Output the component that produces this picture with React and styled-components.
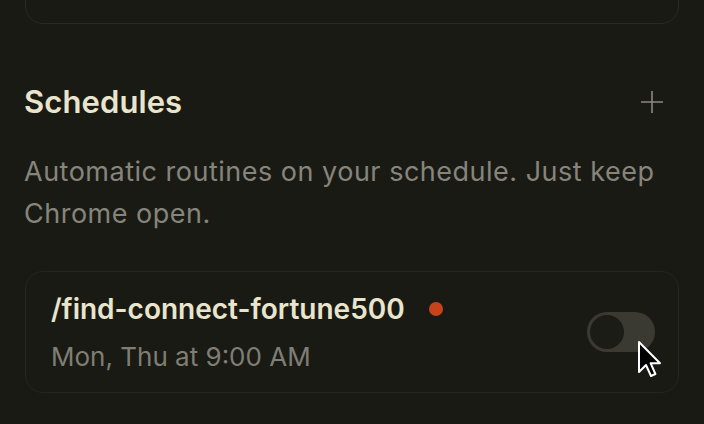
import styled, { createGlobalStyle } from "styled-components";

const Global = createGlobalStyle`
  html, body {
    margin: 0;
    padding: 0;
    background: #1a1a15;
  }
  body {
    font-family: Inter, "Noto Sans", sans-serif;
    -webkit-font-smoothing: antialiased;
  }
`;

const Page = styled.div`
  width: 704px;
  height: 424px;
  overflow: hidden;
  background: #1a1a15;
  padding: 0 24px;
  box-sizing: border-box;
`;

const PrevCard = styled.div`
  margin: -60px 1px 0;
  height: 82px;
  border: 1.5px solid #2a2a23;
  border-radius: 18px;
`;

const Header = styled.div`
  display: flex;
  align-items: center;
  justify-content: space-between;
  margin-top: 58px;
  height: 40px;
`;

const Title = styled.h2`
  margin: 0;
  font-size: 31px;
  line-height: 40px;
  font-weight: 600;
  color: #e9e5cc;
  letter-spacing: 0.1px;
`;

const AddButton = styled.button`
  background: none;
  border: none;
  padding: 0;
  margin-right: 16px;
  width: 24px;
  height: 24px;
  display: flex;
  cursor: pointer;
`;

const Description = styled.p`
  margin: 29px 0 0;
  font-size: 27px;
  line-height: 42px;
  letter-spacing: 0.5px;
  color: #86857b;
  font-weight: 400;
`;

const Card = styled.div`
  margin: 36px 1px 0;
  height: 122px;
  border: 1.5px solid #26261f;
  border-radius: 18px;
  padding: 0 24px 0 25px;
  box-sizing: border-box;
  display: flex;
  align-items: center;
  justify-content: space-between;
`;

const Info = styled.div`
  display: flex;
  flex-direction: column;
  gap: 15px;
`;

const NameRow = styled.div`
  display: flex;
  align-items: center;
  gap: 24px;
`;

const Name = styled.span`
  font-size: 28px;
  line-height: 34px;
  font-weight: 600;
  color: #e9e5cc;
`;

const Dot = styled.span`
  width: 14px;
  height: 14px;
  border-radius: 50%;
  background: #c8431c;
`;

const When = styled.span`
  font-size: 26px;
  line-height: 32px;
  color: #7f7e74;
`;

const ToggleWrap = styled.div`
  position: relative;
  margin-right: -1px;
`;

const Track = styled.div`
  width: 68px;
  height: 40px;
  border-radius: 20px;
  background: ${(p) => (p.$on ? "#c8431c" : "#3a3a33")};
  padding: 3px;
  box-sizing: border-box;
  display: flex;
  justify-content: ${(p) => (p.$on ? "flex-end" : "flex-start")};
`;

const Knob = styled.div`
  width: 34px;
  height: 34px;
  border-radius: 50%;
  background: #1c1c17;
`;

const Cursor = styled.svg`
  position: absolute;
  left: 50px;
  top: 28px;
`;

export default function App() {
  return (
    <Page>
      <Global />
      <PrevCard />
      <Header>
        <Title>Schedules</Title>
        <AddButton aria-label="Add schedule">
          <svg width="24" height="24" viewBox="0 0 24 24" fill="none" stroke="#8a897f" strokeWidth="1.6">
            <path d="M12 1v22M1 12h22" />
          </svg>
        </AddButton>
      </Header>
      <Description>
        Automatic routines on your schedule. Just keep Chrome open.
      </Description>
      <Card>
        <Info>
          <NameRow>
            <Name>/find-connect-fortune500</Name>
            <Dot />
          </NameRow>
          <When>Mon, Thu at 9:00 AM</When>
        </Info>
        <ToggleWrap>
          <Track $on={false}>
            <Knob />
          </Track>
          <Cursor width="24" height="38" viewBox="0 0 12 19">
            <path d="M1 1 L1 16 L4.5 12.5 L7 18 L9.2 17 L6.8 11.6 L11.5 11.6 Z" fill="#000" stroke="#fff" strokeWidth="1" strokeLinejoin="round" />
          </Cursor>
        </ToggleWrap>
      </Card>
    </Page>
  );
}
